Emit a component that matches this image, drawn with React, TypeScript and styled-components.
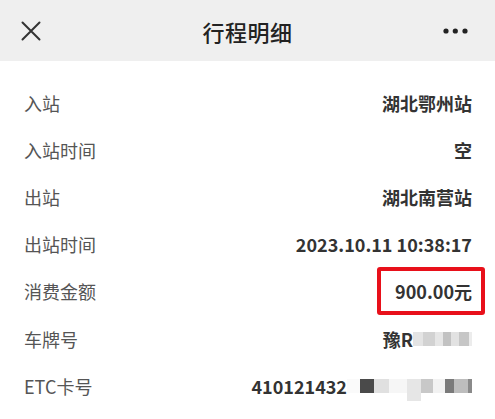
import React from "react";
import styled, { createGlobalStyle } from "styled-components";

const Global = createGlobalStyle`
  body {
    margin: 0;
    background: #ffffff;
    font-family: "Noto Sans CJK SC", "Noto Sans", sans-serif;
  }
`

const Page = styled.div`
  width: 495px;
  height: 419px;
  overflow: hidden;
  background: #fff;
`

const Header = styled.header`
  height: 61px;
  background: #efefef;
  display: grid;
  grid-template-columns: 60px 1fr 60px;
  align-items: center;
`

const Title = styled.h1`
  margin: 0;
  text-align: center;
  font-size: 22px;
  font-weight: 500;
  color: #222;
  letter-spacing: 0.5px;
`

const IconBox = styled.div<{ $right?: boolean }>`
  display: flex;
  justify-content: ${p => (p.$right ? "flex-end" : "flex-start")};
  padding: ${p => (p.$right ? "0 27px 0 0" : "0 0 0 21px")};
`

const List = styled.ul`
  list-style: none;
  margin: 0;
  padding: 18px 23px 0 24px;
`

const Row = styled.li`
  height: 47.2px;
  display: flex;
  align-items: center;
  justify-content: space-between;
`

const Label = styled.span`
  font-size: 18px;
  color: #555;
`

const Value = styled.span`
  font-size: 18px;
  font-weight: 700;
  color: #333;
  display: flex;
  align-items: center;
`

const Boxed = styled.span`
  display: inline-block;
  border: 4px solid #e8101a;
  border-radius: 3px;
  padding: 8px 9px 8px 14px;
  margin: -12px -13px -12px 0;
  line-height: 24px;
`

const Mosaic = styled.span<{ $w: number; $h?: number; $c: string; $dy?: number }>`
  display: inline-block;
  width: ${p => p.$w}px;
  height: ${p => p.$h ?? 14}px;
  background: ${p => p.$c};
  margin-top: ${p => p.$dy ?? 0}px;
`

function Close() {
  return (
    <svg width="20" height="20" viewBox="0 0 20 20">
      <path d="M1.5 1.5 L18.5 18.5 M18.5 1.5 L1.5 18.5" stroke="#333" strokeWidth="2" strokeLinecap="round" />
    </svg>
  );
}

function More() {
  return (
    <svg width="25" height="8" viewBox="0 0 25 8">
      <circle cx="3" cy="4" r="2.6" fill="#222" />
      <circle cx="12.3" cy="4" r="2.6" fill="#222" />
      <circle cx="22" cy="4" r="2.6" fill="#222" />
    </svg>
  );
}

export default function App() {
  return (
    <Page>
      <Global />
      <Header>
        <IconBox><Close /></IconBox>
        <Title>行程明细</Title>
        <IconBox $right><More /></IconBox>
      </Header>
      <List>
        <Row><Label>入站</Label><Value>湖北鄂州站</Value></Row>
        <Row><Label>入站时间</Label><Value>空</Value></Row>
        <Row><Label>出站</Label><Value>湖北南营站</Value></Row>
        <Row><Label>出站时间</Label><Value>2023.10.11 10:38:17</Value></Row>
        <Row><Label>消费金额</Label><Value><Boxed>900.00元</Boxed></Value></Row>
        <Row>
          <Label>车牌号</Label>
          <Value>
            豫R
            <Mosaic $w={10} $c="#e4e4e4" />
            <Mosaic $w={12} $c="#d2d2d2" />
            <Mosaic $w={8} $c="#e6e6e6" />
            <Mosaic $w={8} $c="#c2c2c2" />
            <Mosaic $w={8} $c="#e2e2e2" />
            <Mosaic $w={10} $c="#c6c6c6" />
            <Mosaic $w={3} $c="#ececec" />
          </Value>
        </Row>
        <Row>
          <Label>ETC卡号</Label>
          <Value>
            410121432
            <Mosaic $w={13} $c="#fafafa" />
            <Mosaic $w={14} $c="#4a4a4a" />
            <Mosaic $w={15} $c="#e0e0e0" />
            <Mosaic $w={18} $c="#f6f6f6" />
            <Mosaic $w={14} $c="#e6e6e6" $h={22} $dy={8} />
            <Mosaic $w={12} $c="#c8c8c8" />
            <Mosaic $w={12} $c="#f2f2f2" />
            <Mosaic $w={9} $c="#7a7a7a" />
            <Mosaic $w={14} $c="#bdbdbd" />
            <Mosaic $w={4} $c="#8a8a8a" />
          </Value>
        </Row>
      </List>
    </Page>
  );
}
